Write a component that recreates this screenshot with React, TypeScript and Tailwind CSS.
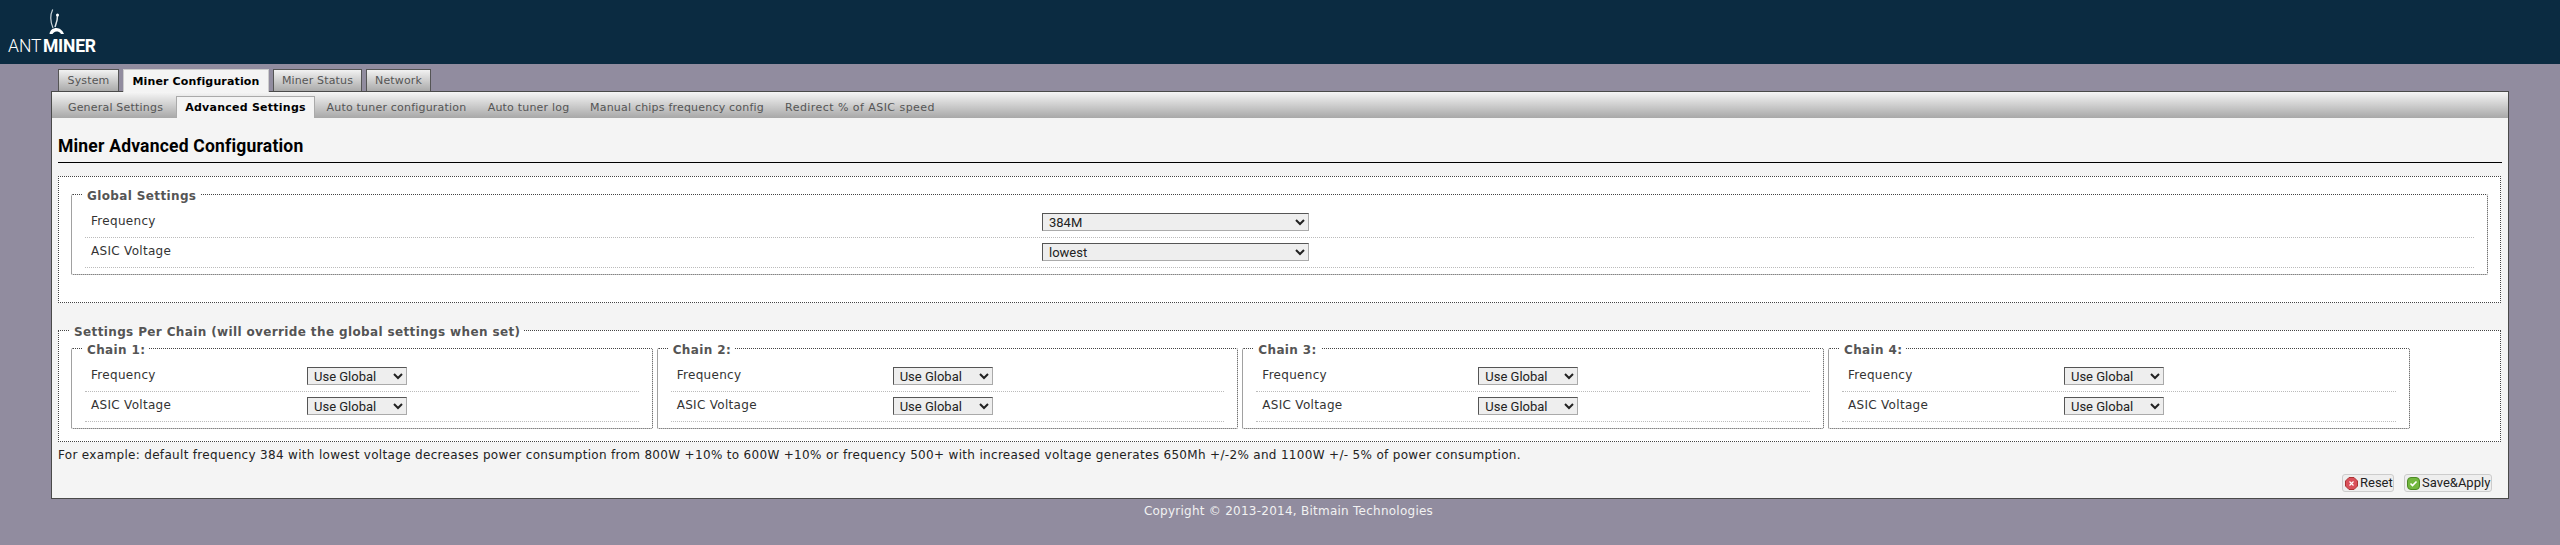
const Row = ({ label, value, w, labelW }: { label: string; value: string; w: string; labelW: string }) => (
  <div className="flex items-start h-[30px] border-b border-dotted border-[#bbb]">
    <div className={`${labelW} shrink-0 pl-[6px] pt-[6px] leading-[15px] tracking-[0.3px] text-[#333]`}>{label}</div>
    <select defaultValue={value} className={`${w} h-[18px] mt-[5px] pl-[2px] bg-[#eee] text-[#222] text-[13px] border border-t-[#555] border-l-[#555] border-r-[#aaa] border-b-[#aaa] [font-family:Roboto,sans-serif]`}>
      <option>{value}</option>
    </select>
  </div>
);

const Chain = ({ n }: { n: number }) => (
  <fieldset className="w-[581.67px] shrink-0 border border-dotted border-[#444] rounded-[2px] px-[13px] pb-[6px]">
    <legend className="-ml-[2px] px-[4px] pt-[4px] font-bold text-[#555] text-[12px] tracking-[0.37px] leading-[16px]">Chain {n}:</legend>
    <div className="pt-[4px]">
      <Row label="Frequency" value="Use Global" w="w-[100px]" labelW="w-[222px]" />
      <Row label="ASIC Voltage" value="Use Global" w="w-[100px]" labelW="w-[222px]" />
    </div>
  </fieldset>
);

export default function App() {
  const tabs = [
    { t: "System", w: "w-[61px]" },
    { t: "Miner Configuration", w: "w-[146px]" },
    { t: "Miner Status", w: "w-[89px]" },
    { t: "Network", w: "w-[65px]" },
  ];
  const subs = [
    { t: "General Settings", c: "w-[117px] tracking-[0.2px]" },
    { t: "Advanced Settings", c: "w-[139px] ml-[2px] tracking-[0.25px]" },
    { t: "Auto tuner configuration", c: "w-[159px] ml-[2px] tracking-[0.2px]" },
    { t: "Auto tuner log", c: "w-[103px] ml-[1px] tracking-[0.2px]" },
    { t: "Manual chips frequency config", c: "w-[194px] tracking-[0.2px]" },
    { t: "Redirect % of ASIC speed", c: "w-[172px] tracking-[0.45px]" },
  ];
  return (
    <div className="min-h-[545px] bg-[#918c9f] text-[12px] text-[#222] [font-family:'DejaVu_Sans',Verdana,sans-serif]">
      <header className="h-[64px] bg-[#0b2b41] pl-[8px] pt-[9px] text-white">
        <svg width="86" height="26" viewBox="0 0 86 26" className="block">
          <path d="M44.7 0.5 C42.5 5 42 12 45 19" fill="none" stroke="#c9d3d9" strokeWidth="1.2" />
          <path d="M49.5 6 C49.8 11 48 15 47 18" fill="none" stroke="#dfe5e8" strokeWidth="1.5" />
          <circle cx="49.5" cy="6" r="1.5" fill="#fff" />
          <path d="M41.5 25 C42 21 45 19 48.5 19 C52 19 55 22 56 25 L53 25 C52 23 50 22.5 48.5 22.5 C46.5 22.5 45 24 44.5 25 Z" fill="#fff" />
        </svg>
        <div className="flex mt-[2px] text-[17.5px] leading-[19px] [font-family:Roboto,sans-serif]">
          <span className="font-light w-[35px]">ANT</span>
          <span className="font-bold tracking-[-0.2px]">MINER</span>
        </div>
      </header>
      <main className="mx-[51px] pt-[5px]">
        <nav className="flex gap-[4px] pl-[7px] h-[22px]">
          {tabs.map(({ t, w }, i) => (
            <div
              key={t}
              className={i === 1
                ? `${w} h-[23px] pt-[2px] flex items-center justify-center text-[11px] tracking-[0.15px] font-bold text-black bg-[#f4f4f4] border border-b-0 border-[#ccc] z-10`
                : `${w} h-[22px] pt-[2px] flex items-center justify-center text-[11px] tracking-[0.15px] text-[#555] border border-b-0 border-[#555] bg-gradient-to-b from-[#f2f2f2] to-[#aaa]`}
            >
              {t}
            </div>
          ))}
        </nav>
        <div className="border border-[#4a4a4a] bg-[#f4f4f4]">
          <nav className="flex h-[26px] items-end bg-gradient-to-b from-[#f6f6f6] to-[#a8a8a8] pl-[5px]">
            {subs.map(({ t, c }, i) => (
              <div
                key={t}
                className={i === 1
                  ? `${c} h-[22px] pt-[2px] flex items-center justify-center text-[11px] font-bold text-black bg-[#f4f4f4] border border-b-0 border-[#aaa]`
                  : `${c} h-[22px] pt-[2px] flex items-center justify-center text-[11px] text-[#555]`}
              >
                {t}
              </div>
            ))}
          </nav>
          <div className="px-[6px]">
            <h2 className="h-[45px] pt-[18px] border-b border-black text-[17.5px] tracking-[0.2px] leading-[20px] font-bold text-black [font-family:Roboto,sans-serif]">Miner Advanced Configuration</h2>
            <div className="mt-[13px] mr-[1px] bg-white border border-dotted border-[#444] h-[127px] px-[12px] pt-[7px]">
              <fieldset className="border border-dotted border-[#444] rounded-[2px] px-[13px] pb-[6px]">
                <legend className="-ml-[2px] px-[4px] pt-[4px] font-bold text-[#555] text-[12px] tracking-[0.37px] leading-[16px]">Global Settings</legend>
                <div className="pt-[4px]">
                  <Row label="Frequency" value="384M" w="w-[267px]" labelW="w-[957px]" />
                  <Row label="ASIC Voltage" value="lowest" w="w-[267px]" labelW="w-[957px]" />
                </div>
              </fieldset>
            </div>
            <fieldset className="mt-[17px] mr-[1px] bg-white border border-dotted border-[#444] px-[12px] pb-[12px]">
              <legend className="-ml-[1px] px-[4px] pt-[4px] font-bold text-[#555] text-[12px] tracking-[0.37px] leading-[16px]">Settings Per Chain (will override the global settings when set)</legend>
              <div className="flex gap-[4px] -mt-[2px]">
                {[1, 2, 3, 4].map((n) => <Chain key={n} n={n} />)}
              </div>
            </fieldset>
            <p className="mt-[6px] leading-[15px] tracking-[0.32px] text-[#222]">For example: default frequency 384 with lowest voltage decreases power consumption from 800W +10% to 600W +10% or frequency 500+ with increased voltage generates 650Mh +/-2% and 1100W +/- 5% of power consumption.</p>
            <div className="flex justify-end gap-[10px] mt-[11px] pr-[10px] pb-[6px] text-[13px] [font-family:Roboto,sans-serif]">
              <button className="h-[18px] w-[52px] flex items-center gap-[2px] pl-[2px] rounded-[3px] border border-[#ccc] bg-[#eee] text-[#222]">
                <svg width="13" height="13" viewBox="0 0 13 13" className="shrink-0"><path d="M4 0.5H9L12.5 4V9L9 12.5H4L0.5 9V4Z" fill="#d9505a" stroke="#a33" /><path d="M4.5 4.5L8.5 8.5M8.5 4.5L4.5 8.5" stroke="#fff" strokeWidth="1.2" /></svg>
                Reset
              </button>
              <button className="h-[18px] w-[88px] flex items-center gap-[2px] pl-[2px] rounded-[3px] border border-[#ccc] bg-[#eee] text-[#222] whitespace-nowrap">
                <svg width="13" height="13" viewBox="0 0 13 13" className="shrink-0"><rect x="0.5" y="0.5" width="12" height="12" rx="3.5" fill="#72b73e" stroke="#4d8a25" /><path d="M3.5 6.5L5.5 8.5L9.5 4.5" fill="none" stroke="#fff" strokeWidth="1.6" /></svg>
                Save&amp;Apply
              </button>
            </div>
          </div>
        </div>
        <footer className="text-center text-[#f2f2f2] pt-[5px] pl-[17px] leading-[15px] tracking-[0.25px]">Copyright © 2013-2014, Bitmain Technologies</footer>
      </main>
    </div>
  );
}
